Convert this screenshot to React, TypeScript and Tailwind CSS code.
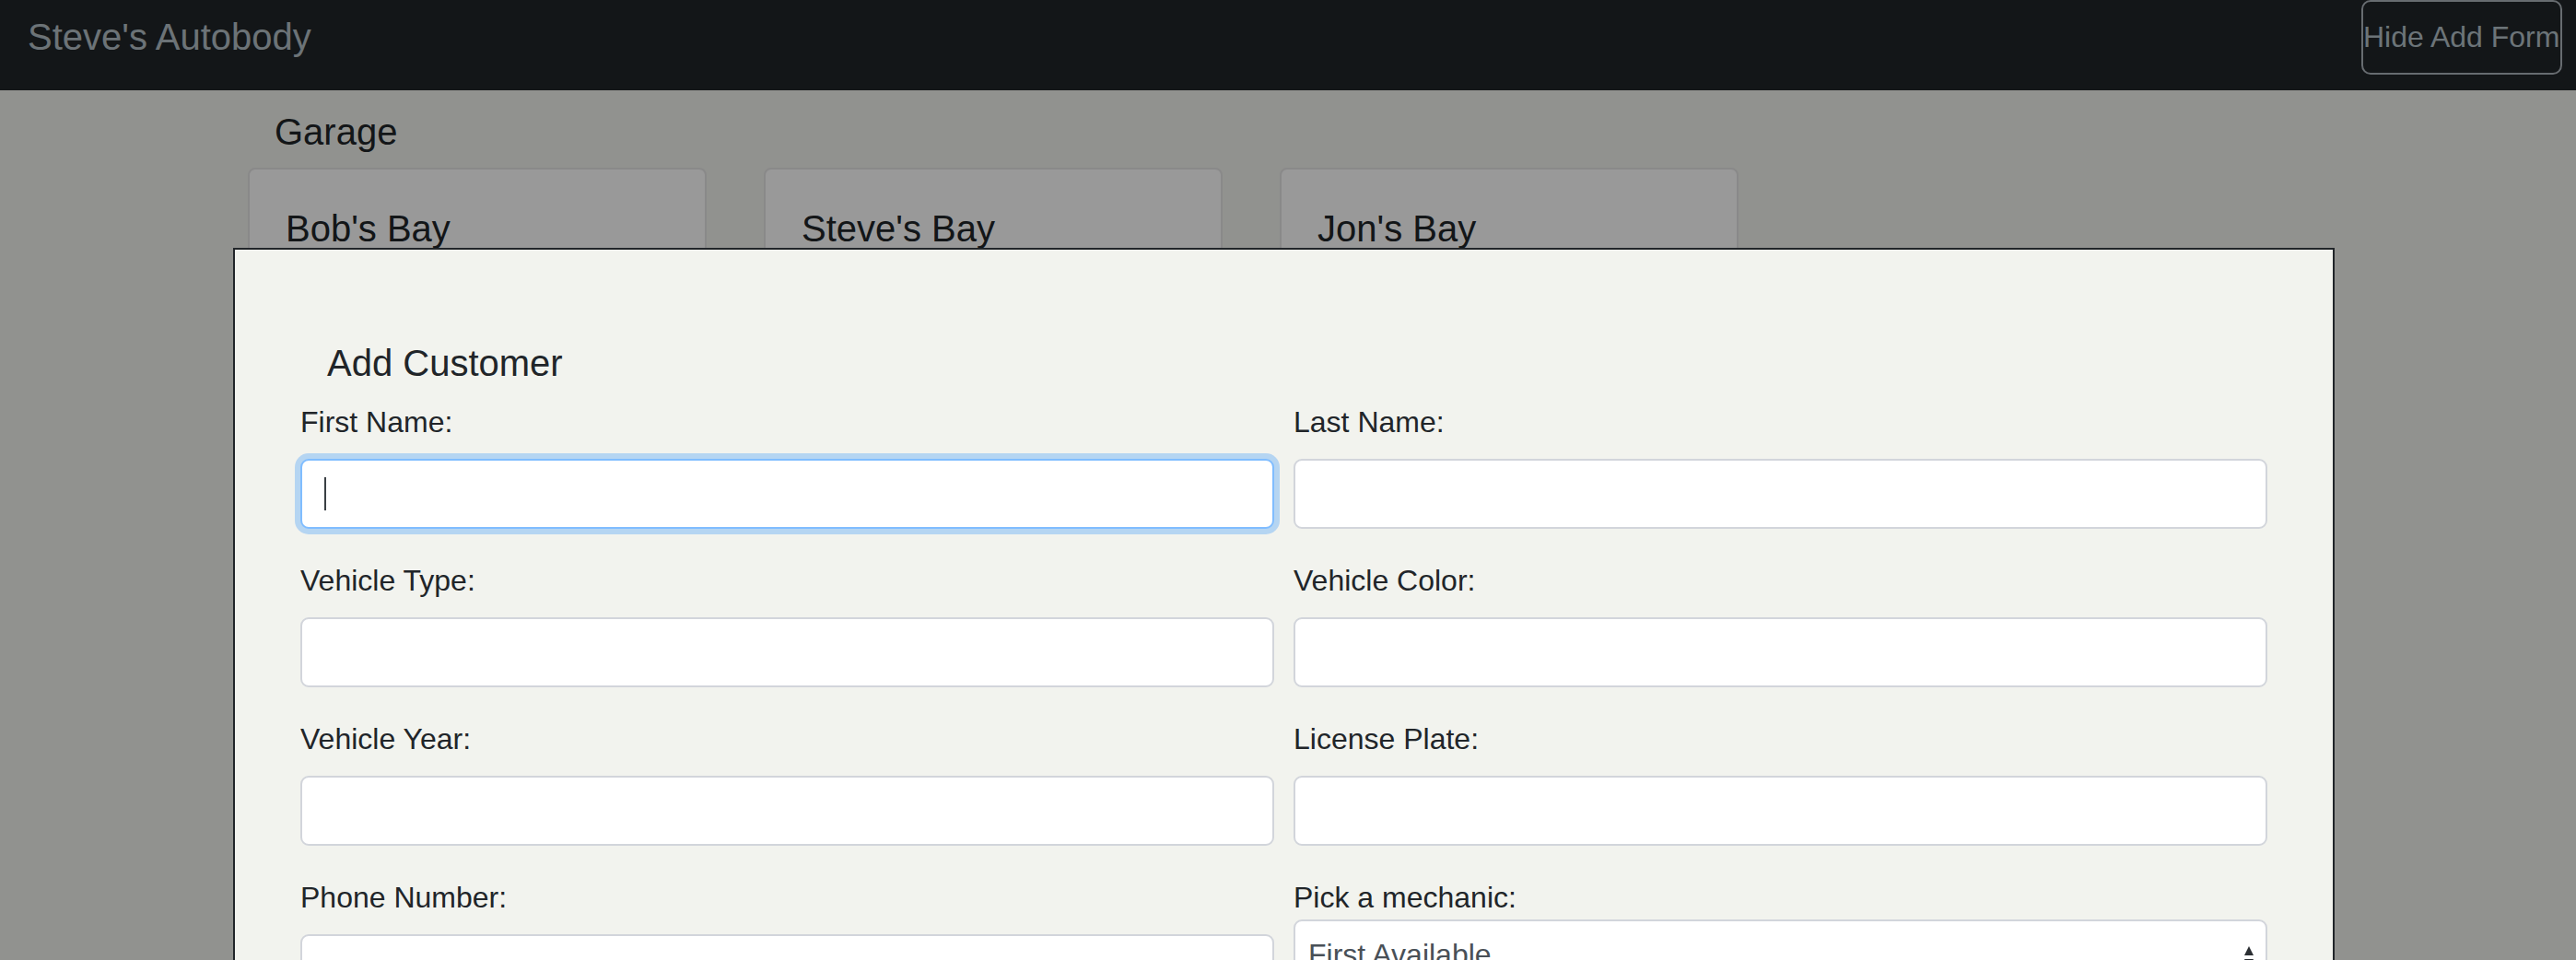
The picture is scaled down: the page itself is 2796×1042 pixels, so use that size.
import React from "react";

const font = { fontFamily: '"Liberation Sans", Arial, sans-serif' };

function Field({ label, focused }: { label: string; focused?: boolean }) {
  return (
    <div className="mb-[32px]">
      <label className="block text-[32px] leading-[48px] text-[#212529] mb-[16px]">{label}</label>
      <div className="relative">
        <input
          className={
            "block w-full h-[76px] bg-white rounded-[9px] border-2 outline-none " +
            (focused
              ? "border-[#80bdff] shadow-[0_0_0_6px_rgba(0,123,255,0.25)]"
              : "border-[#d2d5db]")
          }
        />
        {focused && <div className="absolute left-[26px] top-[20px] w-[2px] h-[36px] bg-[#3a3f44]" />}
      </div>
    </div>
  );
}

function Bay({ name }: { name: string }) {
  return (
    <div className="w-[498px] h-[320px] bg-white border-2 border-[#e5e5e5] rounded-[8px] pt-[40px] px-[39px]">
      <h5 className="text-[40px] leading-[48px] text-[#212529]">{name}</h5>
    </div>
  );
}

export default function App() {
  return (
    <div className="relative w-[2796px] h-[1042px] overflow-hidden bg-[#f2f3ee]" style={font}>
      <nav className="h-[98px] bg-[#212529] flex items-start justify-between pl-[30px] pr-[15px]">
        <span className="text-[40px] leading-[80px] text-[#b4c0c6]">Steve's Autobody</span>
        <button className="w-[218px] h-[81px] border-2 border-[#acb4bb] rounded-[10px] px-0 text-left text-[32px] leading-[77px] text-[#b4c1c8] whitespace-nowrap overflow-hidden">
          Hide Add Form
        </button>
      </nav>

      <main className="pl-[269px]">
        <h5 className="mt-[21px] ml-[29px] text-[40px] leading-[48px] text-[#212529]">Garage</h5>
        <div className="flex gap-[62px] mt-[15px]">
          <Bay name="Bob's Bay" />
          <Bay name="Steve's Bay" />
          <Bay name="Jon's Bay" />
        </div>
      </main>

      <div className="absolute inset-0 bg-black/40" />

      <div className="absolute left-[253px] top-[269px] w-[2281px] h-[900px] bg-[#f2f3ee] border-2 border-[#212529] px-[71px] pt-[99px]">
        <h4 className="ml-[29px] mb-[16px] text-[40px] leading-[48px] text-[#212529]">Add Customer</h4>
        <div className="grid grid-cols-2 gap-x-[21px]">
          <Field label="First Name:" focused />
          <Field label="Last Name:" />
          <Field label="Vehicle Type:" />
          <Field label="Vehicle Color:" />
          <Field label="Vehicle Year:" />
          <Field label="License Plate:" />
          <Field label="Phone Number:" />
          <div>
            <label className="block text-[32px] leading-[48px] text-[#212529]">Pick a mechanic:</label>
            <div className="relative flex items-center h-[76px] bg-white border-2 border-[#d2d5db] rounded-[9px] pl-[14px] pr-[14px]">
              <span className="text-[32px] text-[#495057]">First Available</span>
              <svg className="absolute right-[12px] top-[26px]" width="12" height="28" viewBox="0 0 12 28">
                <path d="M6 1 L11 11 L1 11 Z" fill="#2b2f33" />
                <path d="M1 15 L11 15 L6 25 Z" fill="#2b2f33" />
              </svg>
            </div>
          </div>
        </div>
      </div>
    </div>
  );
}
